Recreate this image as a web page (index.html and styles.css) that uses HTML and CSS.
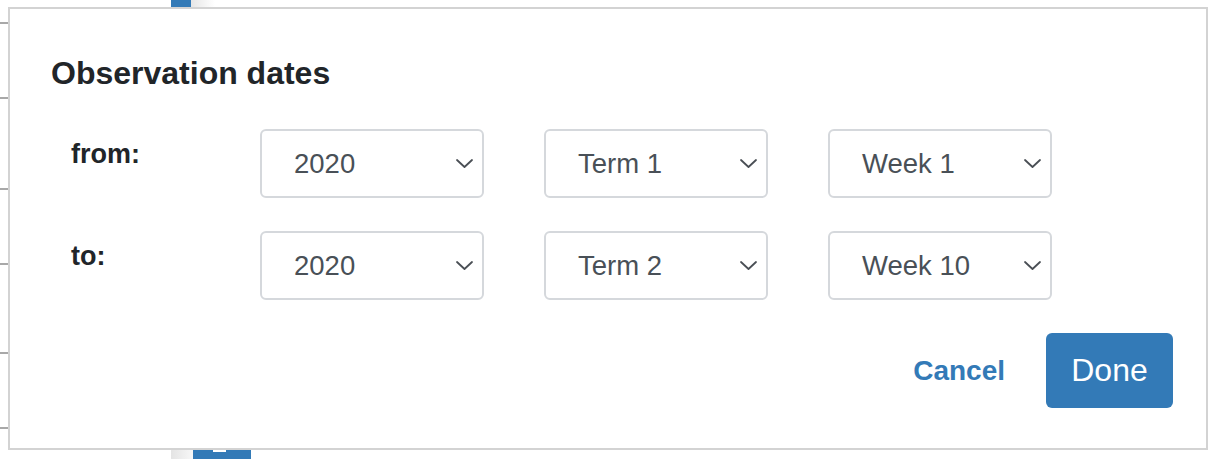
FILE: index.html
```html
<!DOCTYPE html>
<html lang="en">
<head>
<meta charset="utf-8">
<title>Observation dates</title>
<link rel="stylesheet" href="styles.css">
</head>
<body>
<div class="backdrop">
  <span class="tick t1"></span>
  <span class="tick t2"></span>
  <span class="tick t3"></span>
  <span class="tick t4"></span>
  <span class="tick t5"></span>
  <span class="tick t6"></span>
  <span class="bar-top"></span>
  <span class="bar-top-fade"></span>
  <span class="bar-bottom-fade"></span>
  <span class="bar-bottom"><span class="notch"></span></span>
</div>

<div class="modal">
  <h4 class="modal-title">Observation dates</h4>
  <div class="form-grid">
    <div class="label">from:</div>
    <div class="select"><span>2020</span><svg class="chev" viewBox="0 0 17 9" width="17" height="9"><path d="M1 1 L8.5 8 L16 1"/></svg></div>
    <div class="select"><span>Term 1</span><svg class="chev" viewBox="0 0 17 9" width="17" height="9"><path d="M1 1 L8.5 8 L16 1"/></svg></div>
    <div class="select"><span>Week 1</span><svg class="chev" viewBox="0 0 17 9" width="17" height="9"><path d="M1 1 L8.5 8 L16 1"/></svg></div>

    <div class="label">to:</div>
    <div class="select"><span>2020</span><svg class="chev" viewBox="0 0 17 9" width="17" height="9"><path d="M1 1 L8.5 8 L16 1"/></svg></div>
    <div class="select"><span>Term 2</span><svg class="chev" viewBox="0 0 17 9" width="17" height="9"><path d="M1 1 L8.5 8 L16 1"/></svg></div>
    <div class="select"><span>Week 10</span><svg class="chev" viewBox="0 0 17 9" width="17" height="9"><path d="M1 1 L8.5 8 L16 1"/></svg></div>
  </div>
  <div class="footer">
    <a class="cancel" href="#">Cancel</a>
    <button class="done" type="button">Done</button>
  </div>
</div>
</body>
</html>
```

FILE: styles.css
```css
html, body {
  margin: 0;
  padding: 0;
  background: #ffffff;
  width: 1215px;
  height: 459px;
  overflow: hidden;
  font-family: "Liberation Sans", Arial, sans-serif;
}

.backdrop {
  position: absolute;
  left: 0;
  top: 0;
  width: 1215px;
  height: 459px;
}

.tick {
  position: absolute;
  left: 0;
  width: 8px;
  height: 2px;
  background: #a8a8a8;
}
.t1 { top: 22px; }
.t2 { top: 97px; }
.t3 { top: 188px; }
.t4 { top: 263px; }
.t5 { top: 352px; }
.t6 { top: 427px; }

.bar-top {
  position: absolute;
  left: 171px;
  top: 0;
  width: 20px;
  height: 7px;
  background: #337ab7;
}
.bar-top-fade {
  position: absolute;
  left: 191px;
  top: 0;
  width: 24px;
  height: 7px;
  background: linear-gradient(to right, #e6e6e6, #ffffff);
}
.bar-bottom-fade {
  position: absolute;
  left: 171px;
  top: 450px;
  width: 22px;
  height: 9px;
  background: linear-gradient(to right, #e4e4e4, #f7f7f7);
}
.bar-bottom {
  position: absolute;
  left: 193px;
  top: 450px;
  width: 58px;
  height: 9px;
  background: #337ab7;
}
.notch {
  position: absolute;
  left: 20px;
  top: 0;
  width: 13px;
  height: 2px;
  background: #ffffff;
}

.modal {
  position: absolute;
  left: 8px;
  top: 7px;
  width: 1200px;
  height: 443px;
  box-sizing: border-box;
  border: 2px solid #d3d3d3;
  background: #ffffff;
  padding: 45px 33px 0 41px;
}

.modal-title {
  margin: 0;
  font-size: 32px;
  line-height: 38px;
  font-weight: bold;
  color: #212529;
}

.form-grid {
  margin-top: 37px;
  display: grid;
  grid-template-columns: 149px 224px 224px 224px;
  grid-auto-rows: 69px;
  column-gap: 60px;
  row-gap: 33px;
}

.label {
  padding: 9px 0 0 20px;
  font-size: 27px;
  line-height: 32px;
  font-weight: bold;
  color: #212529;
}

.select {
  box-sizing: border-box;
  height: 69px;
  border: 2px solid #d5d8dc;
  border-radius: 6px;
  display: flex;
  align-items: center;
  justify-content: space-between;
  padding: 0 9px 0 32px;
  font-size: 27.5px;
  color: #495057;
}

.chev {
  display: block;
  fill: none;
  stroke: #4a4f55;
  stroke-width: 1.8;
  stroke-linecap: round;
  stroke-linejoin: round;
}

.footer {
  margin-top: 33px;
  display: flex;
  justify-content: flex-end;
  align-items: center;
  gap: 41px;
}

.cancel {
  font-size: 28px;
  font-weight: bold;
  color: #337ab7;
  text-decoration: none;
}

.done {
  width: 127px;
  height: 75px;
  border: none;
  border-radius: 6px;
  background: #337ab7;
  color: #ffffff;
  font-family: "Liberation Sans", Arial, sans-serif;
  font-size: 32px;
  padding: 0;
  cursor: pointer;
}
```
